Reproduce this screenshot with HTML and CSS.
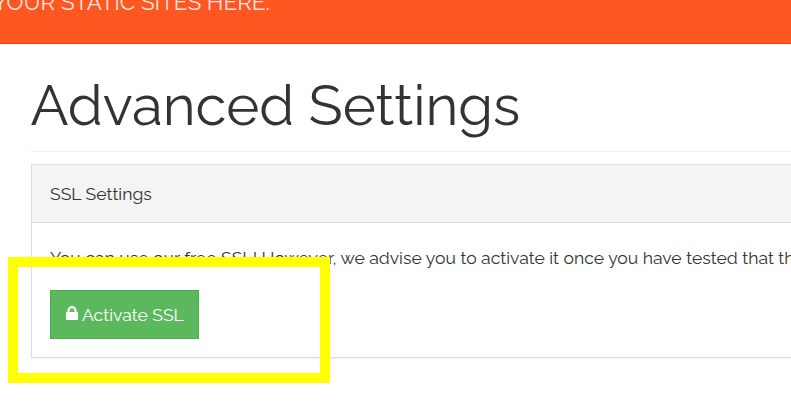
FILE: index.html
```html
<!DOCTYPE html>
<html lang="en">
<head>
<meta charset="utf-8">
<title>Advanced Settings</title>
<link rel="stylesheet" href="styles.css">
</head>
<body>
<header class="banner"><p class="tagline">YOUR STATIC SITES HERE.</p></header>
<main class="content">
  <h1 class="title">Advanced Settings</h1>
  <section class="panel">
    <h2 class="panel-heading">SSL Settings</h2>
    <div class="panel-body">
      <p class="advice">You can use our free SSL! However, we advise you to activate it once you have tested that the</p>
      <button class="activate" type="button">
        <svg class="lock" viewBox="0 0 12 14" aria-hidden="true"><path d="M2.5 6.5V4.6a3.5 3.5 0 0 1 7 0V6.5" fill="none" stroke="currentColor" stroke-width="2.1"/><rect y="6" width="12" height="8" rx=".8" fill="currentColor"/></svg>
        <span>Activate SSL</span>
      </button>
    </div>
  </section>
</main>
<div class="highlight"></div>
</body>
</html>
```
FILE: styles.css
```css
* { box-sizing: border-box; }
body {
  margin: 0;
  height: 408px;
  overflow: hidden;
  background: #fff;
  color: #333;
  font: 17.6px/27px Raleway, Lato, sans-serif;
}
.banner {
  height: 44px;
  overflow: hidden;
  background: #ff5722;
  border-bottom: 1px solid #fc3f03;
}
.tagline {
  margin: -13px 0 0 -7px;
  font-size: 22.5px;
  line-height: 30px;
  white-space: nowrap;
  color: rgba(255, 255, 255, .87);
}
.content { margin-left: 31px; }
.title {
  height: 108px;
  margin: 0 0 12px;
  padding-top: 28px;
  border-bottom: 1px solid #eee;
  font-size: 56.3px;
  line-height: 66px;
  font-weight: 400;
  text-indent: -0.5px;
  white-space: nowrap;
}
.panel {
  height: 194px;
  border: 1px solid #ddd;
  border-right: 0;
  box-shadow: 0 1px 1px rgba(0, 0, 0, .05);
}
.panel-heading {
  height: 58px;
  margin: 0;
  padding: 15px 18px;
  background: #f4f4f4;
  border-bottom: 1px solid #ddd;
  font-size: inherit;
  font-weight: 400;
}
.panel-body { padding: 21px 0 0 18px; }
.advice {
  margin: 0 0 19px;
  white-space: nowrap;
}
.activate {
  display: flex;
  align-items: center;
  gap: 4px;
  width: 149px;
  height: 49px;
  padding: 0 0 0 15px;
  background: #5cb85c;
  border: 1px solid #4cae4c;
  color: #fff;
  font: inherit;
  white-space: nowrap;
}
.lock { width: 12px; height: 14px; flex: none; margin-bottom: 3px; }
.highlight {
  position: absolute;
  left: 8px;
  top: 257px;
  width: 322px;
  height: 126px;
  border: 10px solid #ff0;
}
```
